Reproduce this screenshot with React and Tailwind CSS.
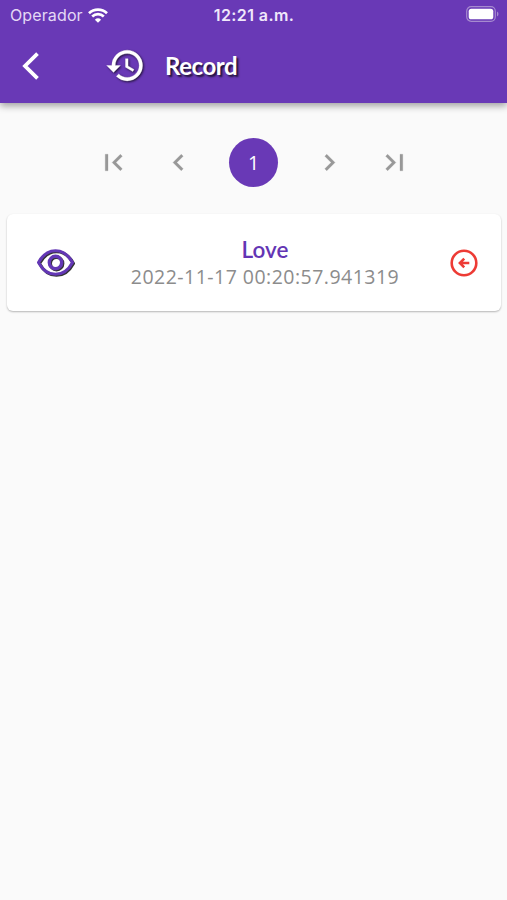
import React from "react";

function PageArrow({ d, className }) {
  return (
    <button className={`flex h-[33px] w-[33px] items-center justify-center text-[#989898] ${className}`}>
      <svg viewBox="0 0 24 24" className="h-full w-full" fill="currentColor" stroke="currentColor" strokeWidth="0.2">
        <path d={d} />
      </svg>
    </button>
  );
}

function StatusBar() {
  return (
    <div className="grid h-[30px] grid-cols-3 items-center pr-2 pl-[10px] font-['Inter',sans-serif]">
      <div className="flex items-center gap-[5px]">
        <span className="w-[73px] text-[16px] leading-5 tracking-[0.12px] whitespace-nowrap text-[#e4d8f5]">Operador</span>
        <svg viewBox="0 0 20 15" className="h-[15px] w-5" fill="none" stroke="white" strokeWidth="2.7">
          <path d="M1 5.2a13 13 0 0 1 18 0M4.2 8.5a8.4 8.4 0 0 1 11.6 0" />
          <path d="M10 14.8 6.9 11.7a4.5 4.5 0 0 1 6.2 0Z" fill="white" stroke="none" />
        </svg>
      </div>
      <span className="-ml-px text-center text-[16px] leading-5 font-semibold tracking-[0.4px] whitespace-nowrap text-[#f0e8fb]">12:21 a.m.</span>
      <svg viewBox="0 0 33 16" className="mb-[2px] h-4 w-[33px] justify-self-end">
        <rect x="0.7" y="0.7" width="28.6" height="14.6" rx="4.5" fill="none" stroke="#a68acf" strokeWidth="1.2" />
        <rect x="2.7" y="2.7" width="24.6" height="10.6" rx="2.6" fill="white" />
        <path d="M31 5.5c2 1 2 4 0 5Z" fill="#a68acf" />
      </svg>
    </div>
  );
}

export default function App() {
  return (
    <div className="min-h-[900px] w-full bg-[#fafafa] font-['Lato',sans-serif]">
      <header className="h-[103px] bg-[#6939b6] shadow-[0_3px_7px_rgba(0,0,0,0.36)]">
        <StatusBar />
        <div className="flex h-[71px] items-center pl-[21px]">
          <svg viewBox="0 0 20 30" className="h-[30px] w-5" fill="none" stroke="white" strokeWidth="3.8">
            <path d="M16.5 2.7 4 15l12.5 12.3" />
          </svg>
          <svg viewBox="0 0 24 24" className="ml-[64px] h-[41px] w-[41px] drop-shadow-[1.5px_1.5px_1px_rgba(0,0,0,0.7)]" fill="white" stroke="white" strokeWidth="0.2">
            <path d="M13 3a9 9 0 0 0-9 9H1l3.89 3.89.07.14L9 12H6c0-3.87 3.13-7 7-7s7 3.13 7 7-3.13 7-7 7c-1.93 0-3.68-.79-4.94-2.06l-1.42 1.42A8.954 8.954 0 0 0 13 21a9 9 0 0 0 0-18zm-1 5v5l4.28 2.54.72-1.21-3.5-2.08V8H12z" />
          </svg>
          <h1 className="ml-[19px] text-[24px] leading-7 font-bold tracking-[-0.45px] text-white [text-shadow:2px_2px_2px_rgba(0,0,0,0.7)]">Record</h1>
        </div>
      </header>

      <nav className="mt-[35px] flex h-[49px] items-center pl-[97px]">
        <PageArrow className="" d="M18.41 16.59 13.82 12l4.59-4.59L17 6l-6 6 6 6zM6 6h2v12H6z" />
        <PageArrow className="ml-[32px]" d="M15.41 7.41 14 6l-6 6 6 6 1.41-1.41L10.83 12z" />
        <span className="ml-[34px] flex h-[49px] w-[49px] items-center justify-center rounded-full bg-[#6939b6] font-['Open_Sans',sans-serif] text-[19.5px] text-white">1</span>
        <PageArrow className="ml-[35px]" d="M10 6 8.59 7.41 13.17 12l-4.58 4.59L10 18l6-6z" />
        <PageArrow className="ml-[32px]" d="M5.59 7.41 10.18 12l-4.59 4.59L7 18l6-6-6-6zM16 6h2v12h-2z" />
      </nav>

      <article className="mt-[27px] mr-[6px] ml-[7px] flex h-[97px] items-center rounded-md bg-white pl-[29px] shadow-[0_1px_2px_rgba(0,0,0,0.28)]">
        <svg viewBox="0 0 40 30" className="mt-px h-[30px] w-10 drop-shadow-[1px_1px_0.5px_rgba(0,0,0,0.8)]" fill="none" stroke="#6337b5">
          <path d="M2.5 14.5C11-1.3 28-1.3 36.5 14.5 28 30.3 11 30.3 2.5 14.5Z" strokeWidth="3" strokeLinejoin="round" />
          <circle cx="19.5" cy="14.5" r="6.2" strokeWidth="3.4" />
        </svg>
        <div className="ml-[48px] w-[282px] text-center">
          <h2 className="text-[22.5px] leading-7 font-semibold text-[#6335b4]">Love</h2>
          <p className="font-['Open_Sans',sans-serif] text-[19.5px] leading-[26px] tracking-[0.48px] whitespace-nowrap text-[#8c8c8c]">2022-11-17 00:20:57.941319</p>
        </div>
        <svg viewBox="0 0 28 28" className="ml-[43.5px] h-7 w-7" fill="none" stroke="#ed3b35">
          <circle cx="14" cy="14" r="12.3" strokeWidth="2.6" />
          <path d="M19.3 14h-8M14.2 9.7 9.9 14l4.3 4.3" strokeWidth="2.6" />
        </svg>
      </article>
    </div>
  );
}
